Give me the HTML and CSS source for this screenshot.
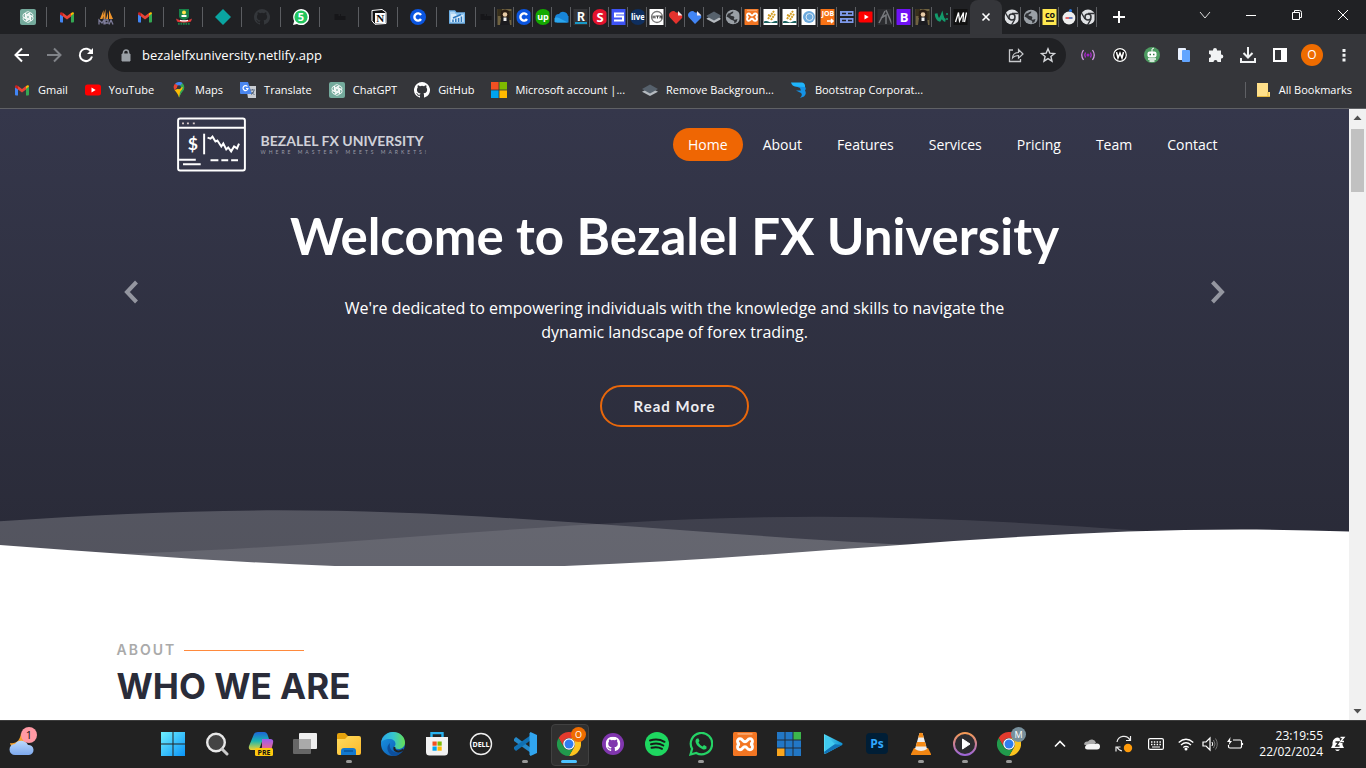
FILE: index.html
```html
<!DOCTYPE html>
<html lang="en">
<head>
<meta charset="utf-8">
<meta name="viewport" content="width=device-width, initial-scale=1">
<title>Bezalel FX University</title>
<link rel="stylesheet" href="styles.css">
</head>
<body>
<svg class="gradients" aria-hidden="true">
  <defs>
    <linearGradient id="gWin" x1="0" y1="0" x2="1" y2="1"><stop offset="0" stop-color="#6ff0ff"/><stop offset="1" stop-color="#0a94f8"/></linearGradient>
    <linearGradient id="gFolder" x1="0" y1="0" x2="1" y2="1"><stop offset="0" stop-color="#ffdc5e"/><stop offset="1" stop-color="#fcb92b"/></linearGradient>
    <linearGradient id="gEdge" x1="0" y1="0" x2="1" y2="0"><stop offset="0" stop-color="#2aa6e8"/><stop offset=".5" stop-color="#35c5d0"/><stop offset="1" stop-color="#66e052"/></linearGradient>
    <linearGradient id="gEdgeLow" x1="0" y1="0" x2="1" y2="1"><stop offset="0" stop-color="#1a9ae8"/><stop offset="1" stop-color="#0c50a8"/></linearGradient>
    <linearGradient id="gCopA" x1="0" y1="0" x2="0" y2="1"><stop offset="0" stop-color="#1d63d8"/><stop offset=".5" stop-color="#19b6b0"/><stop offset="1" stop-color="#f2d22e"/></linearGradient>
    <linearGradient id="gCopB" x1="0" y1="0" x2="0" y2="1"><stop offset="0" stop-color="#9b5cf0"/><stop offset="1" stop-color="#fb6a7c"/></linearGradient>
    <linearGradient id="gCloud" x1="0" y1="0" x2="0" y2="1"><stop offset="0" stop-color="#bcd9fb"/><stop offset="1" stop-color="#7da9ee"/></linearGradient>
    <linearGradient id="gPlay" x1="0" y1="0" x2="1" y2="0"><stop offset="0" stop-color="#58ddf6"/><stop offset="1" stop-color="#0f8fd0"/></linearGradient>
    <linearGradient id="gRing" x1="0" y1="0" x2="0" y2="1"><stop offset="0" stop-color="#f59a55"/><stop offset="1" stop-color="#9d66d8"/></linearGradient>
  </defs>
</svg>
<svg class="sprite" aria-hidden="true">
  <symbol id="gpt" viewBox="0 0 16 16"><rect width="16" height="16" rx="2" fill="#74aa9c"/><g fill="none" stroke="#fff" stroke-width=".8"><path id="petal" d="M5.300 9.600V5.200a2.600 2.600 0 0 1 4.600-1.600M6.700 10.400V6l3.900-2.200"/><use href="#petal" transform="rotate(60 8 8)"/><use href="#petal" transform="rotate(120 8 8)"/><use href="#petal" transform="rotate(180 8 8)"/><use href="#petal" transform="rotate(240 8 8)"/><use href="#petal" transform="rotate(300 8 8)"/></g></symbol>
  <symbol id="gmail" viewBox="0 0 16 16"><path d="M1 4v8.500a1 1 0 0 0 1 1h2V7z" fill="#4285f4"/><path d="M15 4v8.500a1 1 0 0 1-1 1h-2V7z" fill="#34a853"/><path d="M12 7V4.200l.9-.8A1.400 1.400 0 0 1 15 4.500z" fill="#fbbc04"/><path d="M4 7.600V4l4 3 4-3v3.600l-4 3z" fill="#ea4335"/><path d="M1 4.500a1.400 1.400 0 0 1 2.200-1.100L4 4v3.600L1 5.400z" fill="#c5221f"/></symbol>
  <symbol id="mpa" viewBox="0 0 16 16"><path d="M5.500 1 2 10h3.500zM7.500 0v10H4.500zM11 1l4 9h-4zM10 3v7H8z" fill="#f0952b"/><path d="M1 15.500V11l3 3 2-3v4.500M7 15.500V11h3v3H7M11 15.500l2-4.500 2 4.500" fill="none" stroke="#7c7b98" stroke-width="1.300"/></symbol>
  <symbol id="crest" viewBox="0 0 16 16"><path d="M3 0h10v7c0 3-5 4-5 4S3 10 3 7z" fill="#178148"/><circle cx="8" cy="3.500" r="2" fill="#ffe34d"/><path d="M5.500 6h5v2h-5z" fill="#fff"/><path d="M0 9.500c3 2.500 13 2.500 16 0l-1 3c-4 1.500-10 1.500-14 0z" fill="#e03b3b"/><path d="M4 10.800q4 1 8 0v1.200q-4 1-8 0z" fill="#fff"/><path d="M2 14.800h12" stroke="#178148" stroke-width="2" stroke-dasharray="1.700 .8"/></symbol>
  <symbol id="diamond" viewBox="0 0 16 16"><path d="M8 0l8 8-8 8-8-8z" fill="#0aa5a1"/></symbol>
  <symbol id="octo" viewBox="0 0 16 16"><path d="M8 0a8 8 0 0 0-2.530 15.590c.4.070.550-.170.550-.380v-1.490c-2.230.490-2.700-.950-2.700-.950-.360-.920-.890-1.170-.890-1.170-.730-.500.060-.490.060-.490.800.060 1.230.830 1.230.830.720 1.220 1.870.870 2.330.660.070-.520.280-.870.510-1.070-1.780-.200-3.640-.890-3.640-3.950 0-.870.310-1.590.820-2.150-.080-.200-.360-1.020.080-2.120 0 0 .670-.210 2.200.820a7.600 7.600 0 0 1 4 0c1.530-1.040 2.200-.820 2.200-.820.440 1.100.160 1.920.080 2.120.510.560.820 1.270.820 2.150 0 3.070-1.870 3.750-3.650 3.950.290.250.540.730.540 1.480v2.200c0 .210.150.460.550.380A8 8 0 0 0 8 0z" fill="currentColor"/></symbol>
  <symbol id="wa5" viewBox="0 0 16 16"><path d="M0 16l1.200-4A8 8 0 1 1 4 14.900z" fill="#fff"/><circle cx="8" cy="8" r="6.600" fill="#22c55e"/><text x="8" y="12" text-anchor="middle" class="f11" fill="#fff">5</text></symbol>
  <symbol id="dim" viewBox="0 0 16 16"><path d="M2.500 6h4M2.500 8h11M2.500 10h11M8 6h1" stroke="#0c0d0e" stroke-width="1.200"/></symbol>
  <symbol id="notion" viewBox="0 0 16 16"><path d="M1 1.500l10-1 4 2.800v11.200l-11 .8-3-3.500z" fill="#111" stroke="#fff"/><path d="M4 4h10.500v10.500H4z" fill="#fff"/><text x="9.200" y="13" text-anchor="middle" class="serif11" fill="#111">N</text></symbol>
  <symbol id="cc" viewBox="0 0 16 16"><circle cx="8" cy="8" r="8" fill="#0a55e0"/><path d="M11 6A3.600 3.600 0 1 0 11 10" fill="none" stroke="#fff" stroke-width="2.400"/></symbol>
  <symbol id="chartfolder" viewBox="0 0 16 16"><path d="M.700 2h5l1.500 2h8.100v10H.700z" fill="#d9ecfa" stroke="#6db0e6" stroke-width="1.400"/><path d="M2 4h4.500l1 1.500H14" fill="none" stroke="#8ac2ee"/><path d="M4 13v-2.500M6.800 13V9.500M9.600 13V9M12.400 13V7.500M4 9l8-3.500" stroke="#2f78bd" stroke-width="1.500"/></symbol>
  <symbol id="photo" viewBox="0 0 16 16"><path d="M0 0h16v16H0z" fill="#6f6240"/><path d="M0 0h5v7H0zM11 2h5v9h-5z" fill="#38301c"/><path d="M4 2q4-3 8 0l.500 7h-9z" fill="#2a1d14"/><circle cx="8" cy="5.500" r="2.300" fill="#e8cba6"/><path d="M4 9q4-2 8 0l1 7H3z" fill="#1b1b1f"/><path d="M6.500 8.500h3V12h-3z" fill="#eee"/></symbol>
  <symbol id="up" viewBox="0 0 16 16"><circle cx="8" cy="8" r="8" fill="#14a800"/><text x="8" y="11" text-anchor="middle" class="f9" fill="#fff">up</text></symbol>
  <symbol id="cloud" viewBox="0 0 16 16"><path d="M1 9a4 4 0 0 1 4-4 5 5 0 0 1 9 2 3.300 3.300 0 0 1 1 6.500H3z" fill="#1785d8"/><path d="M2 13.500a2.500 2.500 0 0 1 0-5c2 0 3 0 5 1.500l7 3.500z" fill="#2ba7ef"/></symbol>
  <symbol id="rr" viewBox="0 0 16 16"><path d="M0 0h16v16H0z" fill="#343538"/><text x="8" y="11.500" text-anchor="middle" class="m13" fill="#fff">R</text><path d="M2 13h12v2H2z" fill="#1899c7"/></symbol>
  <symbol id="ss" viewBox="0 0 16 16"><circle cx="8" cy="8" r="8" fill="#e3122d"/><text x="8" y="12.500" text-anchor="middle" class="f13" fill="#fff">S</text></symbol>
  <symbol id="sq" viewBox="0 0 16 16"><path d="M0 0h16v16H0z" fill="#3d53f5"/><path d="M13 4.500H4v3h8v4H3" fill="none" stroke="#fff" stroke-width="2"/></symbol>
  <symbol id="live" viewBox="0 0 16 16"><circle cx="8" cy="8" r="8" fill="#0f2f5f"/><text x="8" y="10.500" text-anchor="middle" class="f8" fill="#fff">live</text></symbol>
  <symbol id="htn" viewBox="0 0 16 16"><path d="M0 0h16v16H0z" fill="#fff"/><circle cx="8" cy="8" r="5.500" fill="none" stroke="#777" stroke-width="1.300"/><path d="M4 6.500v3M6 6.500v3M4 8h2M7 7h3M8.500 7v2.500M11 9.500v-3l1.500 3v-3" fill="none" stroke="#444"/></symbol>
  <symbol id="heart" viewBox="0 0 16 16"><path d="M8 15L1.500 8A4 4 0 0 1 8 3.500h3L14.500 7v1.500z" fill="currentColor"/><path d="M10 2l4.500 4.500H10z" fill="#f5e9e9"/></symbol>
  <symbol id="layers" viewBox="0 0 16 16"><path d="M8 5.500L0 9.700 8 14l8-4.300z" fill="#b5babf"/><path d="M8 2.500L0 7l8 4.600L16 7z" fill="#56616c"/></symbol>
  <symbol id="globe" viewBox="0 0 16 16"><circle cx="8" cy="8" r="7.300" fill="#9aa0a6"/><path d="M8 2.500c1 0 0 2-1.500 2.500S5 7 7 7s3 1 2 2.500 1 1.500 3.500.5l-1 3L9 14.500c1-2 0-3-2-3.500S4.500 8.500 1.500 7.500L3 4.500C4 5 7 2.500 8 2.500z" fill="#2f3135"/></symbol>
  <symbol id="xampp" viewBox="0 0 16 16"><rect width="16" height="16" rx="1" fill="#f37623"/><path d="M4.700 4.500c2 0 1.500 2 3.300 2s1.300-2 3.300-2c2.500 0 2 3.500 0 3.500 2 0 2.500 3.800 0 3.800s-1.500-2-3.300-2-1.300 2-3.300 2c-2.500 0-2-3.800 0-3.800-2 0-2.500-3.500 0-3.500z" fill="none" stroke="#fff" stroke-width="1.900"/><path d="M3 1.300h10" stroke="#ffc79b" stroke-width=".7"/></symbol>
  <symbol id="wheat" viewBox="0 0 16 16"><path d="M0 0h16v16H0z" fill="#fff"/><path d="M5 10L11 2M8 11l4-6M5 6l3 1" stroke="#d29d24" stroke-width="2" stroke-dasharray="2 .700"/><path d="M1 12.500c4-1.500 5 1 7 1s3-2.500 7-1v1.500H1z" fill="#19625f"/></symbol>
  <symbol id="swirl" viewBox="0 0 16 16"><path d="M0 0h16v16H0z" fill="#fff"/><circle cx="8" cy="8" r="6" fill="#6ba9dd"/><circle cx="8.500" cy="8" r="3.500" fill="none" stroke="#dceaf7"/></symbol>
  <symbol id="job" viewBox="0 0 16 16"><path d="M0 0h16v16H0z" fill="#f97316"/><text x="8" y="7" text-anchor="middle" class="f7" fill="#fff">JOB</text><path d="M7 12h6M11 10l2 2-2 2" fill="none" stroke="#fff" stroke-width="1.500"/></symbol>
  <symbol id="server" viewBox="0 0 16 16"><path d="M1 2h14v5H1zM1 9h14v5H1z" fill="#7d98e8"/><path d="M3 4.500h4M9 4.500h4M3 11.500h4M9 11.500h4" stroke="#202124" stroke-width="1.300"/></symbol>
  <symbol id="yt" viewBox="0 0 16 16"><rect y="2.500" width="16" height="11" rx="2.500" fill="#f00"/><path d="M6.500 5.500v5L10.700 8z" fill="#fff"/></symbol>
  <symbol id="road" viewBox="0 0 16 16"><path d="M0 0h16v16H0z" fill="#2b2c2f"/><path d="M9 1l6 14M8 2L2 14M4 9l5-3v9" fill="none" stroke="#77797d" stroke-width="1.500"/></symbol>
  <symbol id="bb" viewBox="0 0 16 16"><rect width="16" height="16" rx="1" fill="#7012f5"/><text x="8" y="12.500" text-anchor="middle" class="f13" fill="#fff">B</text></symbol>
  <symbol id="ww" viewBox="0 0 16 16"><path d="M2 4.500q1 6 3.500 6.500Q7 9 8 6.500 9 11 11.500 11.500" fill="none" stroke="#139a6b" stroke-width="3"/><path d="M13 4v8" stroke="#139a6b" stroke-width="1.500" stroke-dasharray="2 3"/></symbol>
  <symbol id="mm" viewBox="0 0 16 16"><path d="M0 0h16v16H0z" fill="#111"/><path d="M2.500 13L5.500 3.500 6.500 12l4-8.500L10 13M13.500 3.500L11.500 13" fill="none" stroke="#fff" stroke-width="1.300"/></symbol>
  <symbol id="chromeg" viewBox="0 0 16 16"><circle cx="8" cy="8" r="7.500" fill="#dfe1e4"/><circle cx="8" cy="8" r="3" fill="#dfe1e4" stroke="#303236" stroke-width="1.500"/><path d="M8 4.500h7M5 10L1.500 4M11 10l-3.500 6" stroke="#303236" stroke-width="1.400"/></symbol>
  <symbol id="go" viewBox="0 0 16 16"><path d="M0 0h16v16H0z" fill="#ffe84f"/><text x="8" y="9" text-anchor="middle" class="f9" fill="#111">co</text><path d="M4 12h8" stroke="#111" stroke-width="1.500"/></symbol>
  <symbol id="badge" viewBox="0 0 16 16"><circle cx="8" cy="9" r="6.500" fill="#eee"/><circle cx="9.500" cy="1.500" r="1.500" fill="#2673df"/><path d="M4.500 9H8" stroke="#df3c42" stroke-width="1.500"/><path d="M8 9h3.500" stroke="#405cb0" stroke-width="1.500"/></symbol>
  <symbol id="chrome" viewBox="0 0 24 24"><path d="M1.600 6A12 12 0 0 1 22.400 6H12a6 6 0 0 0-5.200 9z" fill="#e33b2e"/><path d="M22.400 6A12 12 0 0 1 12 24l5.200-9A6 6 0 0 0 12 6z" fill="#fcc31e"/><path d="M1.600 6l5.200 9a6 6 0 0 0 10.400 0L12 24A12 12 0 0 1 1.600 6z" fill="#219a4c"/><circle cx="12" cy="12" r="5.800" fill="#fff"/><circle cx="12" cy="12" r="4.500" fill="#2f7df0"/></symbol>
</svg>

<header class="tabs">
  <nav class="tab-list" aria-label="Open tabs">
    <button class="tab" aria-label="ChatGPT"><svg class="fav"><use href="#gpt"/></svg></button>
    <button class="tab" aria-label="Gmail"><svg class="fav"><use href="#gmail"/></svg></button>
    <button class="tab" aria-label="phpMyAdmin"><svg class="fav"><use href="#mpa"/></svg></button>
    <button class="tab" aria-label="Gmail"><svg class="fav"><use href="#gmail"/></svg></button>
    <button class="tab" aria-label="School"><svg class="fav"><use href="#crest"/></svg></button>
    <button class="tab" aria-label="Netlify"><svg class="fav"><use href="#diamond"/></svg></button>
    <button class="tab dark" aria-label="GitHub"><svg class="fav"><use href="#octo"/></svg></button>
    <button class="tab" aria-label="WhatsApp"><svg class="fav"><use href="#wa5"/></svg></button>
    <button class="tab" aria-label="Tab"><svg class="fav"><use href="#dim"/></svg></button>
    <button class="tab" aria-label="Notion"><svg class="fav"><use href="#notion"/></svg></button>
    <button class="tab" aria-label="Coursera"><svg class="fav"><use href="#cc"/></svg></button>
    <button class="tab" aria-label="Charts"><svg class="fav"><use href="#chartfolder"/></svg></button>
    <button class="tab slim" aria-label="Tab"><svg class="fav"><use href="#dim"/></svg></button>
    <button class="tab slim" aria-label="Photo"><svg class="fav"><use href="#photo"/></svg></button>
    <button class="tab slim" aria-label="Coursera"><svg class="fav"><use href="#cc"/></svg></button>
    <button class="tab slim" aria-label="Upwork"><svg class="fav"><use href="#up"/></svg></button>
    <button class="tab slim" aria-label="OneDrive"><svg class="fav"><use href="#cloud"/></svg></button>
    <button class="tab slim" aria-label="R"><svg class="fav"><use href="#rr"/></svg></button>
    <button class="tab slim" aria-label="S"><svg class="fav"><use href="#ss"/></svg></button>
    <button class="tab slim" aria-label="Square"><svg class="fav"><use href="#sq"/></svg></button>
    <button class="tab slim" aria-label="Live"><svg class="fav"><use href="#live"/></svg></button>
    <button class="tab slim" aria-label="Seal"><svg class="fav"><use href="#htn"/></svg></button>
    <button class="tab slim red" aria-label="PDF"><svg class="fav"><use href="#heart"/></svg></button>
    <button class="tab slim blue" aria-label="PDF"><svg class="fav"><use href="#heart"/></svg></button>
    <button class="tab slim" aria-label="Remove background"><svg class="fav"><use href="#layers"/></svg></button>
    <button class="tab slim" aria-label="Page"><svg class="fav"><use href="#globe"/></svg></button>
    <button class="tab slim" aria-label="XAMPP"><svg class="fav"><use href="#xampp"/></svg></button>
    <button class="tab slim" aria-label="Wheat"><svg class="fav"><use href="#wheat"/></svg></button>
    <button class="tab slim" aria-label="Wheat"><svg class="fav"><use href="#wheat"/></svg></button>
    <button class="tab slim" aria-label="Swirl"><svg class="fav"><use href="#swirl"/></svg></button>
    <button class="tab slim" aria-label="Jobs"><svg class="fav"><use href="#job"/></svg></button>
    <button class="tab slim" aria-label="Server"><svg class="fav"><use href="#server"/></svg></button>
    <button class="tab slim" aria-label="YouTube"><svg class="fav"><use href="#yt"/></svg></button>
    <button class="tab slim" aria-label="Road"><svg class="fav"><use href="#road"/></svg></button>
    <button class="tab slim" aria-label="Bootstrap"><svg class="fav"><use href="#bb"/></svg></button>
    <button class="tab slim" aria-label="Photo"><svg class="fav"><use href="#photo"/></svg></button>
    <button class="tab slim" aria-label="W"><svg class="fav"><use href="#ww"/></svg></button>
    <button class="tab slim last" aria-label="M"><svg class="fav"><use href="#mm"/></svg></button>
    <button class="tab active" aria-label="Close tab"><svg class="fav" viewBox="0 0 16 16"><path d="M4.500 4.500l7 7M11.500 4.500l-7 7" stroke="#fff" stroke-width="1.600"/></svg></button>
    <button class="tab slim" aria-label="Chrome"><svg class="fav"><use href="#chromeg"/></svg></button>
    <button class="tab slim" aria-label="Page"><svg class="fav"><use href="#globe"/></svg></button>
    <button class="tab slim" aria-label="Go"><svg class="fav"><use href="#go"/></svg></button>
    <button class="tab slim" aria-label="Badge"><svg class="fav"><use href="#badge"/></svg></button>
    <button class="tab slim" aria-label="Chrome"><svg class="fav"><use href="#chromeg"/></svg></button>
    <button class="new-tab" aria-label="New tab"><svg width="14" height="14" viewBox="0 0 14 14"><path d="M7 1v12M1 7h12" stroke="#fff" stroke-width="2"/></svg></button>
  </nav>
  <div class="win-controls">
    <button aria-label="Search tabs"><svg width="12" height="12" viewBox="0 0 12 12"><path d="M1 3l5 6 5-6" fill="none" stroke="#ddd"/></svg></button>
    <button aria-label="Minimize"><svg width="12" height="12" viewBox="0 0 12 12"><path d="M1 6.500h10" stroke="#fff"/></svg></button>
    <button aria-label="Restore"><svg width="12" height="12" viewBox="0 0 12 12"><path d="M1.500 3.500h7v7h-7zM3.500 3V1.500h5a2 2 0 0 1 2 2v5H9" fill="none" stroke="#fff"/></svg></button>
    <button aria-label="Close"><svg width="12" height="12" viewBox="0 0 12 12"><path d="M1 1l10 10M11 1L1 11" stroke="#fff"/></svg></button>
  </div>
</header>

<div class="toolbar">
  <button class="tool" aria-label="Back"><svg width="16" height="16" viewBox="0 0 16 16"><path d="M15 8H2M8 1.500L1.500 8 8 14.500" fill="none" stroke="#fff" stroke-width="2"/></svg></button>
  <button class="tool" aria-label="Forward"><svg width="16" height="16" viewBox="0 0 16 16"><path d="M1 8h13M8 1.500L14.500 8 8 14.500" fill="none" stroke="#808388" stroke-width="2"/></svg></button>
  <button class="tool" aria-label="Reload"><svg width="16" height="16" viewBox="0 0 16 16"><path d="M13.500 5A6.200 6.200 0 1 0 14 9.500" fill="none" stroke="#fff" stroke-width="2"/><path d="M15 1v6H9z" fill="#fff"/></svg></button>
  <div class="omnibox">
    <svg width="10" height="13" viewBox="0 0 10 13"><path d="M1 5h8v7H1z" fill="#9aa0a6" stroke="#9aa0a6"/><path d="M2.500 5V3.500a2.500 2.500 0 0 1 5 0V5" fill="none" stroke="#9aa0a6" stroke-width="1.500"/></svg>
    <input class="address" type="text" aria-label="Address" value="bezalelfxuniversity.netlify.app">
    <button class="tool" aria-label="Share"><svg width="16" height="16" viewBox="0 0 16 16"><path d="M5 3H1.500v11.500h11V12" fill="none" stroke="#c7c9cc" stroke-width="1.300"/><path d="M4.500 11c.3-4 2.500-5.500 6-5.500V2.500L15 7l-4.500 4.200V8.500c-2.500 0-4.500.500-6 2.500z" fill="none" stroke="#c7c9cc" stroke-width="1.200"/></svg></button>
    <button class="tool" aria-label="Bookmark"><svg width="16" height="16" viewBox="0 0 16 16"><path d="M8 1.800l1.800 4.300 4.700.4-3.600 3 1.100 4.700L8 11.700l-4 2.500 1.100-4.700-3.600-3 4.700-.4z" fill="none" stroke="#d5d7da" stroke-width="1.400"/></svg></button>
  </div>
  <button class="tool" aria-label="Broadcast"><svg width="16" height="16" viewBox="0 0 16 16"><circle cx="8" cy="8" r="1.500" fill="#a11fc9"/><path d="M5.500 5.500q-1.500 2.500 0 5M10.500 5.500q1.500 2.500 0 5" fill="none" stroke="#b32bd6" stroke-width="1.300"/><path d="M3.500 3q-3.500 5 0 10M12.500 3q3.500 5 0 10" fill="none" stroke="#d39ae4" stroke-width="1.300"/></svg></button>
  <button class="tool" aria-label="W extension"><svg width="16" height="16" viewBox="0 0 16 16"><circle cx="8" cy="8" r="7.200" fill="#111"/><circle cx="8" cy="8" r="6.300" fill="none" stroke="#fff" stroke-width="1.200"/><path d="M4.500 5l1.500 6 2-5 2 5 1.500-6" fill="none" stroke="#fff" stroke-width="1.500"/></svg></button>
  <button class="tool" aria-label="Robot"><svg width="16" height="16" viewBox="0 0 16 16"><circle cx="8" cy="8" r="8" fill="#4d9b61"/><path d="M8 5V2l2-1" fill="none" stroke="#fff"/><rect x="3.500" y="4.500" width="9" height="6" rx="2" fill="#fff"/><path d="M5.500 7.500H7M9 7.500h1.500" stroke="#367c49" stroke-width="1.500"/><path d="M4 12h8M5.500 14h5" stroke="#fff" stroke-width="1.500"/></svg></button>
  <button class="tool" aria-label="Reader"><svg width="16" height="16" viewBox="0 0 16 16"><rect x="2" y="1" width="8" height="12" rx="1" fill="#e9f1ff"/><rect x="6" y="3" width="8" height="12" rx="1" fill="#62a5ff"/></svg></button>
  <button class="tool" aria-label="Extensions"><svg width="16" height="16" viewBox="0 0 16 16"><path d="M1 3.500h4V3a2 2 0 0 1 4 0v.500h4v4h.300a2 2 0 0 1 0 4H13V15H9.500a2 2 0 0 0-4 0H1v-4a2 2 0 0 0 0-4z" fill="#f1f3f4"/></svg></button>
  <button class="tool" aria-label="Downloads"><svg width="16" height="16" viewBox="0 0 16 16"><path d="M8 0v10M3.500 6L8 10.500 12.500 6M1 11v4h14v-4" fill="none" stroke="#f1f3f4" stroke-width="2"/></svg></button>
  <button class="tool" aria-label="Side panel"><svg width="16" height="16" viewBox="0 0 16 16"><path d="M2 2h12v12H2z" fill="none" stroke="#fff" stroke-width="2"/><path d="M9 2h5v12H9z" fill="#fff"/></svg></button>
  <button class="tool" aria-label="Profile"><span class="avatar">O</span></button>
  <button class="tool" aria-label="Menu"><svg width="16" height="16" viewBox="0 0 16 16"><path d="M8 2v3M8 6.800v3M8 11.500v3" stroke="#f1f3f4" stroke-width="3"/></svg></button>
</div>

<nav class="bookmarks" aria-label="Bookmarks">
  <a href="#"><svg class="fav"><use href="#gmail"/></svg>Gmail</a>
  <a href="#"><svg class="fav"><use href="#yt"/></svg>YouTube</a>
  <a href="#"><svg class="fav" viewBox="0 0 16 16"><path d="M8 0a5.300 5.300 0 0 1 5.300 5.300C13.300 9 9 10.500 8 15.500z" fill="#34a853"/><path d="M8 0a5.300 5.300 0 0 0-4 1.800L8 5l3.500-4A5.300 5.300 0 0 0 8 0z" fill="#4285f4"/><path d="M4 1.800A5.300 5.300 0 0 0 3.500 8L8 4z" fill="#ea4335"/><path d="M3.500 8c2 2.500 3.700 4 4.500 7.500l2-5L12 5z" fill="#fbbc04"/><path d="M9 10l4-5c.500 3-1.500 4-3 6.500S9 15 8 15.500z" fill="#34a853"/><circle cx="8" cy="5.200" r="2" fill="#35363a"/></svg>Maps</a>
  <a href="#"><svg class="fav" viewBox="0 0 16 16"><path d="M6 4h10v12H8z" fill="#c9cdd3"/><path d="M0 0h8l4 12H1a1 1 0 0 1-1-1z" fill="#4a86ee"/><path d="M7.500 4.500A2.500 2.500 0 1 0 8 6.500H6" fill="none" stroke="#fff" stroke-width="1.200"/><path d="M10 8h5M12.500 7v1M14 8.500q-.500 3-3 4M11.500 10l3 3" stroke="#5f6f85"/></svg>Translate</a>
  <a href="#"><svg class="fav"><use href="#gpt"/></svg>ChatGPT</a>
  <a href="#"><svg class="fav"><use href="#octo"/></svg>GitHub</a>
  <a href="#"><svg class="fav" viewBox="0 0 16 16"><path d="M0 0h7.600v7.600H0z" fill="#f25022"/><path d="M8.400 0H16v7.600H8.400z" fill="#7fba00"/><path d="M0 8.400h7.600V16H0z" fill="#00a4ef"/><path d="M8.400 8.400H16V16H8.400z" fill="#ffb900"/></svg>Microsoft account |...</a>
  <a href="#"><svg class="fav"><use href="#layers"/></svg>Remove Backgroun...</a>
  <a href="#"><svg class="fav" viewBox="0 0 16 16"><path d="M4 4h9q3 2 1 4.500 2 3-1 6L9 16q3-3 1-5L5 8.500h5L9 6z" fill="#1593e6"/><path d="M0 .500h11q3.500.500 3 4.500L4 4.500Q1 4 0 .500z" fill="#1fb4fa"/></svg>Bootstrap Corporat...</a>
  <a class="all" href="#"><svg class="fav" viewBox="0 0 16 16"><path d="M2 1h11v9h2v5H2z" fill="#ffe08a"/><path d="M13 10v5M2 14.500h13" stroke="#e5b93f"/></svg>All Bookmarks</a>
</nav>

<div class="viewport">
  <main class="page">
    <section class="hero">
      <div class="container site-head">
        <a class="logo" href="#" aria-label="Bezalel FX University">
          <svg width="69" height="55" viewBox="0 0 70 56" fill="none" stroke="#fff" stroke-width="2"><rect x="1" y="1.500" width="68" height="53" rx="2"/><path d="M1 11h68"/><path d="M5 6.500h2M10 6.500h2M16 6.500h2" stroke="#d8c9c9"/><path d="M27.500 17v21"/><path d="M31 21l3 1 2-2 3 5 2-1 4 6 2-3 3 6 2-2 3 4 3-5 3 2 2-5"/><path d="M2 43.500h17M6 48h18M34 44h8M45 44h7M55 44h7"/><text x="16" y="34" text-anchor="middle" class="dollar" fill="#fff" stroke="none">$</text></svg>
          <span class="logo-text"><span class="logo-name">BEZALEL FX UNIVERSITY</span><span class="logo-sub">WHERE MASTERY MEETS MARKETS!</span></span>
        </a>
        <nav class="site-nav" aria-label="Main">
          <a class="current" href="#">Home</a><a href="#">About</a><a href="#">Features</a><a href="#">Services</a><a href="#">Pricing</a><a href="#">Team</a><a href="#">Contact</a>
        </nav>
      </div>
      <div class="slide">
        <button class="arrow" aria-label="Previous"><svg width="16" height="24" viewBox="0 0 16 24"><path d="M13.500 2L4 12l9.500 10" fill="none" stroke="#9496a0" stroke-width="4"/></svg></button>
        <div class="copy">
          <h1>Welcome to Bezalel FX University</h1>
          <p>We're dedicated to empowering individuals with the knowledge and skills to navigate the dynamic landscape of forex trading.</p>
          <a class="more" href="#">Read More</a>
        </div>
        <button class="arrow" aria-label="Next"><svg width="16" height="24" viewBox="0 0 16 24"><path d="M2.500 2L12 12 2.500 22" fill="none" stroke="#9496a0" stroke-width="4"/></svg></button>
      </div>
      <svg class="waves" viewBox="0 24 150 28" preserveAspectRatio="none" aria-hidden="true">
        <defs><path id="wave" d="M-160 44c30 0 58-18 88-18s58 18 88 18 58-18 88-18 58 18 88 18v44h-352z"/></defs>
        <use href="#wave" x="163" y="3" fill="#fff" fill-opacity=".1"/>
        <use href="#wave" x="103" y="0" fill="#fff" fill-opacity=".2"/>
        <use href="#wave" x="34" y="9" fill="#fff"/>
      </svg>
    </section>
    <section class="container about">
      <h2>About</h2>
      <p>Who we are</p>
    </section>
  </main>
  <div class="scrollbar" aria-hidden="true">
    <svg width="17" height="17" viewBox="0 0 17 17"><path d="M4.500 11h8l-4-4.500z" fill="#505050"/></svg>
    <span class="thumb"></span>
    <svg class="down" width="17" height="17" viewBox="0 0 17 17"><path d="M4.500 6h8l-4 4.500z" fill="#505050"/></svg>
  </div>
</div>

<footer class="taskbar">
  <button class="weather" aria-label="Weather"><svg width="26" height="26" viewBox="0 0 26 26"><path d="M12 2c-1 8-5 11-11 10 1 5 6 8 11 5s6-10 0-15z" fill="#f5a22d"/><path d="M6 24a5.500 5.500 0 0 1 0-11 7.500 7.500 0 0 1 13 1 5 5 0 0 1 1 10z" fill="url(#gCloud)"/></svg><span class="count">1</span></button>
  <nav class="apps" aria-label="Taskbar apps">
    <button aria-label="Start"><svg width="24" height="24" viewBox="0 0 24 24"><path d="M0 0h11.500v11.500H0zM12.500 0H24v11.500H12.500zM0 12.500h11.500V24H0zM12.500 12.500H24V24H12.500z" fill="url(#gWin)"/></svg></button>
    <button aria-label="Search"><svg width="24" height="24" viewBox="0 0 24 24"><circle cx="11" cy="10.500" r="8.800" fill="#444" stroke="#e8e8e8" stroke-width="2.400"/><path d="M17 17l5 5" stroke="#ccc" stroke-width="3" stroke-linecap="round"/></svg></button>
    <button aria-label="Copilot"><svg width="26" height="26" viewBox="0 0 26 26"><path d="M6 3q1-2 4-2h6q3 0 4 4l1 3h-6l-3 8q-1 3-4 3H4q-4 0-3-4z" fill="url(#gCopA)"/><path d="M14 8h8q4 0 3 4l-2 8H10q3 0 4-4z" fill="url(#gCopB)"/><rect x="7" y="17" width="18" height="8" rx="1.500" fill="#ffc90e"/><text x="16" y="24" text-anchor="middle" class="f7" fill="#111">PRE</text></svg></button>
    <button aria-label="Task view"><svg width="24" height="24" viewBox="0 0 24 24"><rect x="6" y="1" width="18" height="16" rx="1" fill="#eee"/><rect y="7" width="18" height="15" rx="1" fill="#666"/><path d="M6 7h12v10H6z" fill="#aaa"/></svg></button>
    <button class="open" aria-label="File Explorer"><svg width="24" height="24" viewBox="0 0 24 24"><path d="M0 3a2 2 0 0 1 2-2h6l3 3v5H0z" fill="#e6a30d"/><path d="M0 7h8l3-3h11a2 2 0 0 1 2 2v15a2 2 0 0 1-2 2H2a2 2 0 0 1-2-2z" fill="url(#gFolder)"/><path d="M4 23v-4a3 3 0 0 1 3-3h9a3 3 0 0 1 3 3v4z" fill="#1379cf"/><path d="M7 19h9" stroke="#0a559a" stroke-width="1.500"/></svg></button>
    <button aria-label="Edge"><svg width="24" height="24" viewBox="0 0 24 24"><circle cx="12" cy="12" r="12" fill="url(#gEdgeLow)"/><path d="M0 11C1 4 6 0 12 0c7 0 12 5 12 10.500 0 4-3 6.500-6.500 6.500-3 0-4-1-4-2 0-.900 1-1.500 1-3C14.500 9 12 7 8.500 7 4 7 .500 9 0 11z" fill="url(#gEdge)"/><path d="M9 11c-1.500 6 3 11 10 9l3.500-2C20 21 17 24 12 24 7 22 4 15 9 11z" fill="#0d4f9c"/><path d="M13.500 15c-1 5 5 5.500 9 2.500" fill="none" stroke="#222" stroke-width="2"/></svg></button>
    <button aria-label="Microsoft Store"><svg width="24" height="24" viewBox="0 0 24 24"><path d="M6.500 6V1h11v5" fill="none" stroke="#27b1ee" stroke-width="2.400"/><path d="M1 5h22v15a3.500 3.500 0 0 1-3.500 3.500h-15A3.500 3.500 0 0 1 1 20z" fill="#f2f2f2"/><path d="M7.500 9.500h4.200v4.200H7.500z" fill="#f25022"/><path d="M12.500 9.500h4.200v4.200h-4.200z" fill="#7fba00"/><path d="M7.500 14.500h4.200v4.200H7.500z" fill="#00a4ef"/><path d="M12.500 14.500h4.200v4.200h-4.200z" fill="#ffb900"/></svg></button>
    <button aria-label="Dell"><svg width="24" height="24" viewBox="0 0 24 24"><circle cx="12" cy="12" r="10.500" fill="#222" stroke="#f0f0f0" stroke-width="1.400"/><text x="12" y="14.500" text-anchor="middle" class="f7" fill="#fff">DELL</text></svg></button>
    <button class="open" aria-label="VS Code"><svg width="24" height="24" viewBox="0 0 24 24"><path d="M1 7l2-2 15 11v5L1 9z" fill="#2489ca"/><path d="M1 17l2 2L18 8V3L1 15z" fill="#1070b3"/><path d="M17.500 0L24 3v18l-6.500 3-1-1.500v-21z" fill="#31a5ef"/></svg></button>
    <button class="open focus" aria-label="Chrome"><svg width="24" height="24"><use href="#chrome"/></svg><span class="mark">O</span></button>
    <button class="gh" aria-label="GitHub Desktop"><svg width="24" height="24" viewBox="0 0 24 24"><circle cx="12" cy="12" r="11" fill="#8036ae"/><svg x="4.500" y="4.500" width="15" height="15"><use href="#octo"/></svg></svg></button>
    <button aria-label="Spotify"><svg width="24" height="24" viewBox="0 0 24 24"><circle cx="12" cy="12" r="12" fill="#1ed760"/><path d="M5 8.500q8-2.300 14.500 1.300M6 12.300q7-1.900 12.300 1.200M6.500 15.800q6-1.400 10.500 1" fill="none" stroke="#171b18" stroke-width="2" stroke-linecap="round"/></svg></button>
    <button class="open" aria-label="WhatsApp"><svg width="24" height="24" viewBox="0 0 24 24"><path d="M1.500 22.500l1.600-5.700A10.700 10.700 0 1 1 7.300 21z" fill="none" stroke="#25d366" stroke-width="2.200"/><path d="M8 6.500c-3 2-1 6 2 8.500s6 3.500 7.500 1.500v-2L15 13l-1.500 1.500Q11 13.500 9.500 10.500L10.500 9l-1-2.500z" fill="#25d366"/></svg></button>
    <button aria-label="XAMPP"><svg width="24" height="24"><use href="#xampp"/></svg></button>
    <button aria-label="Grid"><svg width="24" height="24" viewBox="0 0 24 24"><path d="M0 0h24v24H0z" fill="#2277c5"/><path d="M16 0h8v8h-8z" fill="#3cb64b"/><path d="M0 16h8v8H0z" fill="#faa61e"/><path d="M8 0v24M16 0v24M0 8h24M0 16h24" stroke="#202c38"/></svg></button>
    <button aria-label="Media"><svg width="24" height="24" viewBox="0 0 24 24"><path d="M3 2l18 9q1.500 1 0 2L4 22q-1 0-1-2z" fill="url(#gPlay)"/><path d="M3 20l9-8 9 1L4 22z" fill="#1172b7"/><path d="M4 3l10 9-10 7z" fill="#40c9ef"/></svg></button>
    <button aria-label="Photoshop"><svg width="24" height="24" viewBox="0 0 24 24"><rect x="1" y="1" width="22" height="21" rx="4" fill="#001e36"/><text x="12" y="16" text-anchor="middle" class="f12" fill="#31a8ff">Ps</text></svg></button>
    <button class="open" aria-label="VLC"><svg width="24" height="24" viewBox="0 0 24 24"><path d="M5 16h14l3 6v1H2v-1z" fill="#f18613"/><path d="M10.500 1h3L18 17q-6 4-12 0z" fill="#eee"/><path d="M10.300 1.500Q12 0 13.700 1.500l1 4h-5.400zM8 10h8l1.300 4.500H6.700z" fill="#f58b16"/></svg></button>
    <button class="open" aria-label="Media Player"><svg width="24" height="24" viewBox="0 0 24 24"><circle cx="12" cy="12" r="11" fill="#2c2c30" stroke="url(#gRing)" stroke-width="2"/><path d="M9.500 7v10l7.500-5z" fill="#fff" stroke="#fff" stroke-linejoin="round"/></svg></button>
    <button class="open" aria-label="Chrome profile M"><svg width="24" height="24"><use href="#chrome"/></svg><span class="mark grey">M</span></button>
  </nav>
  <div class="tray">
    <button aria-label="Show hidden icons"><svg width="16" height="16" viewBox="0 0 16 16"><path d="M3 10.500L8 5.500l5 5" fill="none" stroke="#fff" stroke-width="1.600"/></svg></button>
    <button aria-label="OneDrive"><svg width="16" height="16" viewBox="0 0 16 16"><path d="M0 8.500a3.500 3.500 0 0 1 4-3 4.500 4.500 0 0 1 8 1L7 11z" fill="#aaa"/><path d="M1 11Q2 8 6 8t7-.500a3 3 0 0 1 0 6H3.500Q1 13.500 1 11z" fill="#f3f3f3"/></svg></button>
    <button aria-label="Update"><svg width="18" height="18" viewBox="0 0 18 18"><path d="M2 7a7 7 0 0 1 13-2M15.500 1v4.500H11M7 16a7 7 0 0 1-5-4M1 16.500V12h4.500" fill="none" stroke="#eee" stroke-width="1.200"/><circle cx="13" cy="13" r="4.200" fill="#ff9b0b"/></svg></button>
    <button aria-label="Keyboard"><svg width="16" height="16" viewBox="0 0 16 16"><rect x=".600" y="2.600" width="14.800" height="10.800" rx="1.500" fill="none" stroke="#fff" stroke-width="1.200"/><path d="M3 6h10.500M3 8.500h10.500" stroke="#fff" stroke-width="1.300" stroke-dasharray="1.500 1.300"/><path d="M4 11h8" stroke="#fff"/></svg></button>
    <button class="quick" aria-label="Network, sound and battery"><svg width="16" height="16" viewBox="0 0 16 16"><path d="M.700 6.500q7.300-6.500 14.600 0M3 9q5-4.500 10 0M5.300 11.500q2.700-2.300 5.400 0" fill="none" stroke="#fff" stroke-width="1.300"/><circle cx="8" cy="13" r="1.500" fill="#fff"/></svg><svg width="16" height="16" viewBox="0 0 16 16"><path d="M1 6h3l4-4v12l-4-4H1z" fill="none" stroke="#fff" stroke-width="1.200"/><path d="M10 6q1.500 2 0 4" fill="none" stroke="#fff"/><path d="M11.500 4q3 4 0 8M13.500 2.500q3.500 5.500 0 11" fill="none" stroke="#777"/></svg><svg width="18" height="16" viewBox="0 0 18 16"><path d="M7 4h7a1.500 1.500 0 0 1 1.500 1.500v5A1.500 1.500 0 0 1 14 12H4a1.500 1.500 0 0 1-1.500-1.500V9M16.500 7v2" fill="none" stroke="#fff" stroke-width="1.200"/><path d="M4.500 1L1 6h2.500l-1 3.500L6 5H4z" fill="#fff"/></svg></button>
    <button class="clock"><span>23:19:55</span><span>22/02/2024</span></button>
    <button class="bell" aria-label="Notifications"><svg width="16" height="18" viewBox="0 0 16 18"><path d="M1 13l1.500-3V7.500a5 5 0 0 1 7-4.500l1 5h2v2l1.500 3zM5 14.500h5q-2.500 3-5 0z" fill="#fff"/><path d="M10.500 2.500H14L10.500 6.500H14" fill="none" stroke="#fff" stroke-width="1.300"/><path d="M5.500 7h3.500L6 11h3.500" fill="none" stroke="#222" stroke-width="1.300"/></svg></button>
  </div>
</footer>
</body>
</html>
```
FILE: styles.css
```css
* { box-sizing: border-box; }

body {
  margin: 0;
  height: 100vh;
  display: flex;
  flex-direction: column;
  overflow: hidden;
  background: #35363a;
  color: #fff;
  font-family: "Open Sans", "Noto Sans", sans-serif;
  font-size: 12px;
}

button {
  padding: 0;
  border: 0;
  background: none;
  color: inherit;
  font: inherit;
  display: flex;
  align-items: center;
  justify-content: center;
}

a { color: inherit; text-decoration: none; }
svg { display: block; flex: none; }
.gradients { position: absolute; width: 0; height: 0; }
.sprite { display: none; }

/* lettering inside icons */
.f7 { font: 700 7px "Open Sans", sans-serif; }
.f8 { font: 700 8px "Open Sans", sans-serif; }
.f9 { font: 700 9px "Open Sans", sans-serif; }
.f11 { font: 700 11px "Open Sans", sans-serif; }
.f12 { font: 700 12px "Open Sans", sans-serif; }
.f13 { font: 700 13px "Open Sans", sans-serif; }
.m13 { font: 700 13px "Liberation Mono", monospace; }
.serif11 { font: 700 11px "Liberation Serif", serif; }
.dollar { font: 700 18px Lato, sans-serif; }

/* tab strip */
.tabs { display: flex; justify-content: space-between; height: 34px; background: #202124; }
.tab-list { display: flex; padding-left: 8px; }
.tab { position: relative; width: 39px; }
.tab::after { content: ""; position: absolute; right: 0; top: 7px; height: 20px; width: 1px; background: #5b5d61; }
.fav { width: 16px; height: 16px; }
.tab.slim { width: 19px; }
.tab.slim .fav { clip-path: inset(0 1px); }
.tab.dark { color: #34373b; }
.tab.red { color: #e5322d; }
.tab.blue { color: #4285f4; }
.tab.last::after, .tab.active::after { display: none; }
.tab.active { width: 32px; background: #35363a; border-radius: 8px 8px 0 0; }
.new-tab { width: 44px; }
.win-controls { display: flex; height: 29px; }
.win-controls button { width: 46px; }

/* toolbar */
.toolbar { display: flex; align-items: center; height: 42px; padding: 0 6px; }
.tool { width: 32px; height: 32px; flex: none; }
.omnibox { flex: 1; display: flex; align-items: center; height: 34px; margin: 0 6px; padding: 0 2px 0 13px; border-radius: 17px; background: #202124; }
.address { flex: 1; min-width: 0; padding: 0; margin-left: 11px; border: 0; outline: 0; background: none; color: #fff; font: 13px "Open Sans", sans-serif; }
.avatar { width: 22px; height: 22px; border-radius: 50%; background: #ef6c00; line-height: 22px; text-align: center; }

/* bookmarks */
.bookmarks { display: flex; gap: 17px; height: 33px; padding: 0 14px 5px; border-bottom: 1px solid #606165; font-size: 11px; }
.bookmarks a { display: flex; align-items: center; gap: 8px; white-space: nowrap; }
.bookmarks .all { margin-left: auto; padding-left: 9px; height: 16px; align-self: center; border-left: 1px solid #606165; }

/* web page */
.viewport { flex: 1; min-height: 0; display: flex; background: #fff; }
.page { flex: 1; overflow: hidden; }
.container { width: 100%; max-width: 1140px; margin: 0 auto; padding: 0 12px; }
.hero { background: linear-gradient(#35374b, #292a37); }
.site-head { display: flex; align-items: center; justify-content: space-between; height: 70px; }
.logo { display: flex; align-items: center; gap: 15px; padding-left: 60px; }
.logo-text { display: flex; flex-direction: column; }
.logo-name { color: #d0d1d8; font: 700 14px/16px Lato, sans-serif; }
.logo-sub { color: #9b9ca8; font: 5px/7px Lato, sans-serif; letter-spacing: 3px; white-space: nowrap; }
.site-nav { display: flex; gap: 5px; font-size: 14px; line-height: 21px; }
.site-nav a { padding: 6px 15px; border-radius: 50px; }
.site-nav .current { background: #ef6603; }
.slide { display: flex; justify-content: space-between; padding: 28px 123px 79px; }
.arrow { width: 16px; height: 170px; }
.copy { text-align: center; }
h1 { margin: 0 0 31px; font: 700 51px/58px Lato, sans-serif; }
.copy p { max-width: 680px; margin: 0 auto 41px; font-size: 16px; line-height: 24px; }
.more { display: inline-block; padding: 9px 32px; border: 2px solid #e8670b; border-radius: 50px; color: #ececf0; font: 700 15px/20px Lato, sans-serif; letter-spacing: 1px; }
.waves { width: 100%; height: 60px; overflow: hidden; }
.about { padding-top: 74px; text-transform: uppercase; }
.about h2 { display: flex; align-items: center; gap: 8px; margin: 0; color: #aaa; font: 600 14px/20px Inter, sans-serif; letter-spacing: 2px; }
.about h2::after { content: ""; width: 120px; height: 1px; background: #ff8a3d; }
.about p { margin: 4px 0 0; color: #2a2c39; font: 700 35px/44px Inter, sans-serif; }
.scrollbar { width: 17px; display: flex; flex-direction: column; background: #f1f1f1; }
.thumb { height: 63px; margin: 3px 2px 0; background: #c1c1c1; }
.down { margin-top: auto; }

/* taskbar */
.taskbar { display: flex; height: 48px; padding-bottom: 1px; background: #222; border-top: 1px solid #3d3d3d; }
.weather { position: relative; width: 44px; margin-right: 107px; }
.count { position: absolute; top: 6px; right: 7px; width: 16px; height: 16px; border-radius: 50%; background: #ff99a4; color: #111; line-height: 16px; text-align: center; font-size: 11px; }
.apps { display: flex; }
.apps button { position: relative; width: 44px; }
.apps .open::after { content: ""; position: absolute; bottom: 4px; width: 6px; height: 3px; border-radius: 2px; background: #999; }
.apps .focus svg { z-index: 1; }
.apps .focus::before { content: ""; position: absolute; top: 3px; left: 4px; width: 36px; height: 40px; border: 1px solid #414141; border-radius: 4px; background: #303030; }
.apps .focus::after { width: 16px; background: #4cc2ff; }
.mark { position: absolute; z-index: 2; top: 6px; right: 5px; width: 15px; height: 15px; border-radius: 50%; background: #ef6c00; font-size: 9px; line-height: 15px; text-align: center; }
.mark.grey { background: #78909c; }
.tray { display: flex; margin-left: auto; padding-right: 13px; }
.tray button { width: 32px; }
.tray .quick { width: 78px; gap: 8px; }
.tray .clock { flex-direction: column; align-items: flex-end; width: 73px; line-height: 16px; }
.tray .bell { width: 30px; }
```
